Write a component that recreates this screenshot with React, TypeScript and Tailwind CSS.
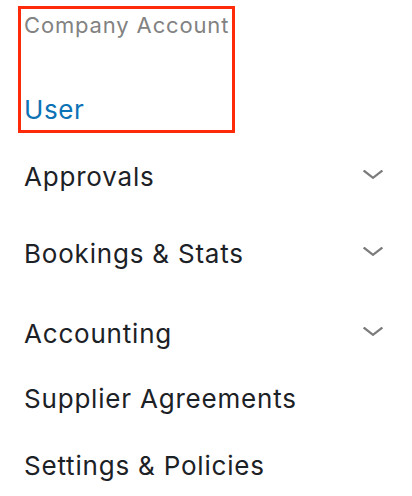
import { ReactNode } from 'react';

const Chevron = () => (
  <svg width="20" height="9" viewBox="0 0 20 9" className="mt-[9px] shrink-0" fill="none">
    <polyline points="1.5,1.2 10,7.8 18.5,1.2" stroke="#7b7b7b" strokeWidth="2.2" strokeLinecap="square" />
  </svg>
);

function NavItem({ label, expandable, className }: { label: string; expandable?: boolean; className?: string }) {
  return (
    <div className={`flex items-start justify-between pl-6 pr-[29px] ${className ?? ''}`}>
      <span className="text-[26px] leading-8 tracking-[0.8px] text-[#1c2126]">{label}</span>
      {expandable && <Chevron />}
    </div>
  );
}

function Highlight({ children }: { children: ReactNode }) {
  // red annotation box around the account switcher
  return (
    <div className="pl-[18px] pt-[6px]">
      <div className="flex h-[127px] w-[217px] flex-col border-[3px] border-[#ff2a0a] pl-[3px]">{children}</div>
    </div>
  );
}

export default function App() {
  return (
    <div className="h-[496px] w-[412px] overflow-hidden bg-white font-['Inter','Liberation_Sans',sans-serif]">
      <Highlight>
        <span className="mt-[2px] text-[22px] leading-7 tracking-[0.85px] text-[#828282]">Company Account</span>
        <span className="mt-[55px] text-[26px] leading-8 tracking-[0.6px] text-[#0b72b5]">User</span>
      </Highlight>
      <nav className="flex flex-col">
        <NavItem label="Approvals" expandable className="mt-[28px]" />
        <NavItem label="Bookings & Stats" expandable className="mt-[45px]" />
        <NavItem label="Accounting" expandable className="mt-[48px]" />
        <NavItem label="Supplier Agreements" className="mt-[33px]" />
        <NavItem label="Settings & Policies" className="mt-[35px]" />
      </nav>
    </div>
  );
}
